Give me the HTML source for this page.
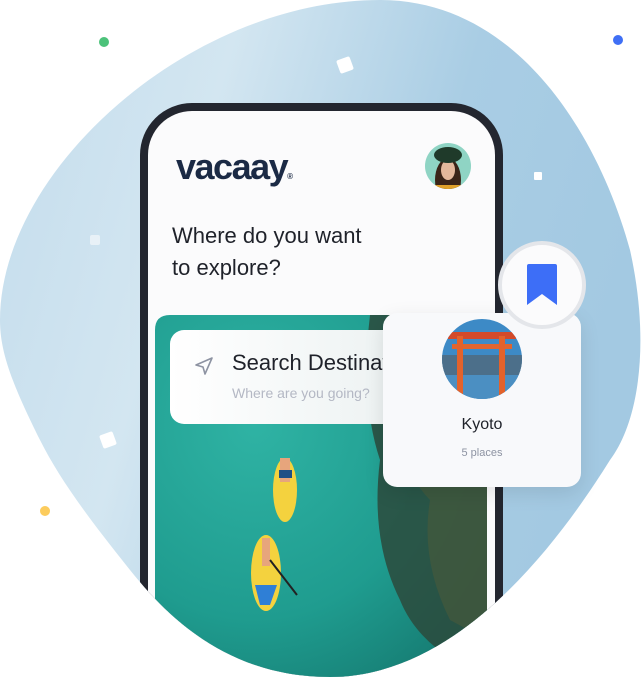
<!DOCTYPE html>
<html><head><meta charset="utf-8"><style>
html,body{margin:0;width:643px;height:677px;background:#fff;overflow:hidden;position:relative;font-family:"Liberation Sans",sans-serif}
.abs{position:absolute}
</style></head><body>
<svg class="abs" style="left:0;top:0" width="643" height="677" viewBox="0 0 643 677">
<defs>
<clipPath id="blob"><path d="M330 677 C230 677 170 620 130 570 C90 520 60 480 40 440 C10 380 0 350 0 320 C0 170 190 0 380 0 C520 0 600 140 630 250 C650 340 640 420 610 460 C560 540 460 677 330 677 Z"/></clipPath>
<linearGradient id="bg" x1="0" y1="0" x2="1" y2="0.3"><stop offset="0" stop-color="#c3dcec"/><stop offset="0.35" stop-color="#d3e6f1"/><stop offset="0.7" stop-color="#a9cde4"/><stop offset="1" stop-color="#a3c9e2"/></linearGradient>
<radialGradient id="sea" cx="0.3" cy="0.3" r="0.9"><stop offset="0" stop-color="#2fb3a4"/><stop offset="0.6" stop-color="#1f9c8f"/><stop offset="1" stop-color="#15786f"/></radialGradient>
<clipPath id="av"><circle cx="448" cy="166" r="23"/></clipPath>
<clipPath id="ky"><circle cx="482" cy="359" r="40"/></clipPath>
</defs>
<g clip-path="url(#blob)">
<rect width="643" height="677" fill="url(#bg)"/>
<rect x="140" y="103" width="363" height="700" rx="52" fill="#23262f"/>
<rect x="148" y="111" width="347" height="700" rx="44" fill="#fbfbfc"/>
<path d="M155 330 Q155 315 170 315 H487 V677 H155 Z" fill="url(#sea)"/>
<path d="M370 315 Q360 400 380 460 Q370 540 400 600 Q420 650 487 677 V315 Z" fill="#2b4a3c" opacity="0.85"/>
<path d="M390 430 Q410 480 430 500 Q420 560 450 620 L487 640 V420 Z" fill="#4a5a3a" opacity="0.6"/>
<ellipse cx="285" cy="490" rx="12" ry="32" fill="#f4d23e"/>
<rect x="280" y="458" width="10" height="24" fill="#e7a57c"/>
<rect x="279" y="470" width="13" height="8" fill="#1f4f86"/>
<ellipse cx="266" cy="573" rx="15" ry="38" fill="#f4d23e"/>
<path d="M255 585 L277 585 L270 605 L260 605 Z" fill="#2f7fd6"/>
<rect x="262" y="538" width="8" height="28" fill="#e7a57c"/>
<line x1="270" y1="560" x2="297" y2="595" stroke="#222" stroke-width="2"/>
</g>
<g clip-path="url(#av)"><rect x="420" y="140" width="60" height="60" fill="#8fd4c4"/><ellipse cx="448" cy="180" rx="13" ry="22" fill="#3a2418"/><ellipse cx="448" cy="170" rx="7" ry="10" fill="#e3b89c"/><ellipse cx="448" cy="155" rx="14" ry="8" fill="#1f3a2a"/><rect x="430" y="185" width="36" height="20" fill="#e0a12a"/></g>
<circle cx="104" cy="42" r="5" fill="#4cc27a"/>
<circle cx="618" cy="40" r="5" fill="#3f6ff5"/>
<circle cx="45" cy="511" r="5" fill="#fccc5d"/>
<rect x="338" y="58" width="14" height="14" rx="2" fill="#fff" transform="rotate(-20 345 65)"/>
<rect x="101" y="433" width="14" height="14" rx="2" fill="#fff" transform="rotate(-20 108 440)"/>
<rect x="534" y="172" width="8" height="8" rx="1" fill="#fff"/>
<rect x="90" y="235" width="10" height="10" rx="2" fill="#e8f1f7"/>
</svg>
<div class="abs" style="left:176px;top:146px;font-size:36px;font-weight:bold;color:#1b2a45;letter-spacing:-1.5px">vacaay<span style="font-size:8px">®</span></div>
<div class="abs" style="left:172px;top:220px;font-size:22px;line-height:32px;color:#1f222a">Where do you want<br>to explore?</div>
<div class="abs" style="left:170px;top:330px;width:213px;height:94px;background:linear-gradient(90deg,#fff,#eef3f3);border-radius:14px 0 0 14px;overflow:hidden">
<svg class="abs" style="left:24px;top:26px" width="20" height="20" viewBox="0 0 20 20"><path d="M18 2 L2 9 L9 11 L11 18 Z" fill="none" stroke="#8d93a2" stroke-width="1.6" stroke-linejoin="round"/></svg>
<div class="abs" style="left:62px;top:20px;font-size:22px;color:#1f222a;white-space:nowrap">Search Destinations</div>
<div class="abs" style="left:62px;top:55px;font-size:14px;color:#b4b8c4;white-space:nowrap">Where are you going?</div>
</div>
<div class="abs" style="left:383px;top:313px;width:198px;height:174px;background:#f8f9fb;border-radius:14px;box-shadow:0 6px 20px rgba(0,0,0,0.1)"></div>
<svg class="abs" style="left:0;top:0" width="643" height="677">
<g clip-path="url(#ky)"><rect x="440" y="318" width="84" height="84" fill="#3d8ac6"/><rect x="440" y="355" width="84" height="20" fill="#4c6f8a"/><rect x="440" y="375" width="84" height="30" fill="#4b8fc2"/><rect x="448" y="332" width="68" height="7" fill="#d34a2a"/><rect x="452" y="344" width="60" height="5" fill="#e0652f"/><rect x="457" y="336" width="6" height="60" fill="#e3622b"/><rect x="499" y="336" width="6" height="60" fill="#e3622b"/></g>
<circle cx="542" cy="285" r="42" fill="#fbfbfc" stroke="#e4e6ea" stroke-width="4"/>
<path d="M527 266 Q527 264 529 264 H555 Q557 264 557 266 V305 L542 294 L527 305 Z" fill="#3d6ef7"/>
</svg>
<div class="abs" style="left:383px;top:416px;width:198px;text-align:center;font-size:16px;color:#1f222a">Kyoto</div>
<div class="abs" style="left:383px;top:447px;width:198px;text-align:center;font-size:11px;color:#8d93a2">5 places</div>
</body></html>
